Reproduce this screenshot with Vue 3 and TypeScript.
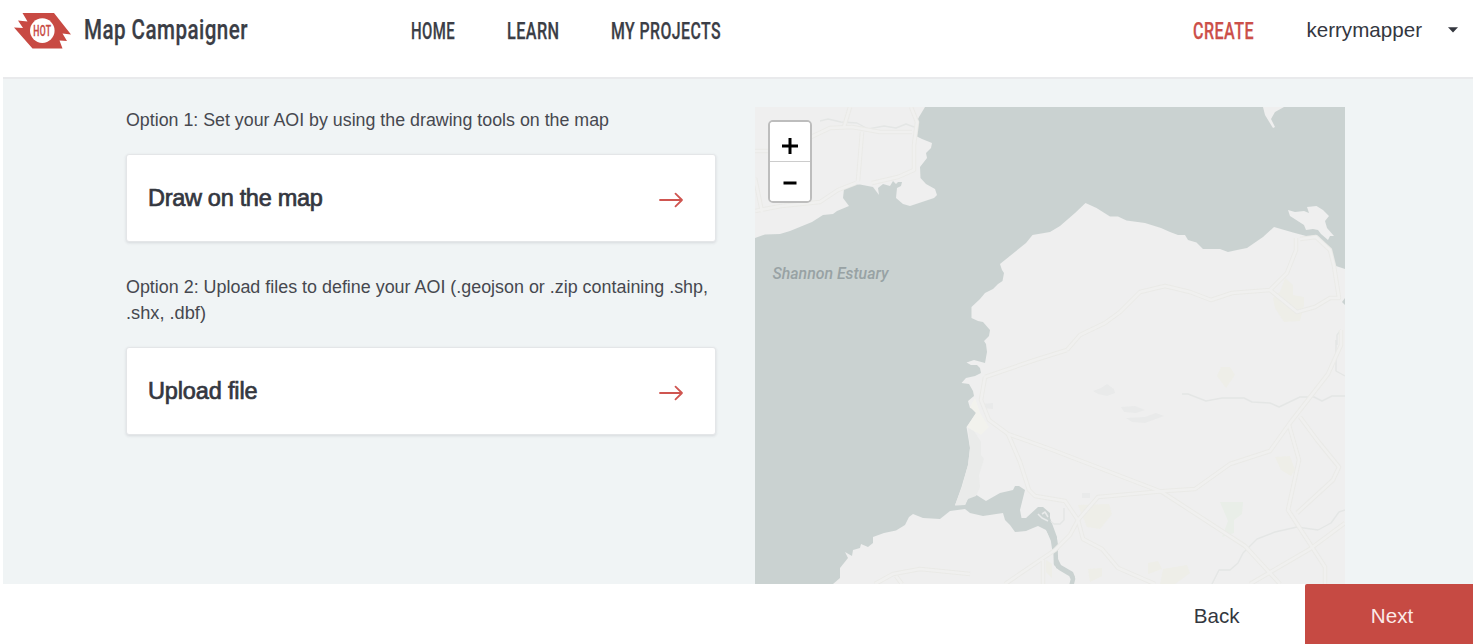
<script setup lang="ts">
interface Option {
  lines: { text: string; width: number }[]
  title: string
  cls: string
}

const navItems = [
  { label: 'HOME', width: 44 },
  { label: 'LEARN', width: 52.5 },
  { label: 'MY PROJECTS', width: 110 },
]

const options: Option[] = [
  {
    lines: [{ text: 'Option 1: Set your AOI by using the drawing tools on the map', width: 483 }],
    title: 'Draw on the map',
    cls: 'draw',
  },
  {
    lines: [
      { text: 'Option 2: Upload files to define your AOI (.geojson or .zip containing .shp,', width: 582 },
      { text: '.shx, .dbf)', width: 80 },
    ],
    title: 'Upload file',
    cls: 'upload',
  },
]

const land: string[] = [
  'M755 107H925L919 117L914 128L916 136L922 139L932 143L931 148L926 153L927 158L920 167L920.500 178L926 184L935 189L937 195L934 198L910 206L903 204L896 198L897 188L901 186L902 182L898 182L896 184L893 181L890 186L883 184L878 188L879 195L873 187L860 184.500L850 185L844 189L843 198L849 206L837 211L833 214L823 215L812 222L790 231L780 234L765 234.500L755 238Z',
  'M1050 232L1032.500 235L1026 243L1000 264L1002 270L1004 273L1002.500 281L998 284L993 289L985 293L980 299L971.500 307V318L978 321L983 322L990 330L989 336L984 341L986 344L987 352L985 363L974 360L966.500 362.500L971 365L977 365L980 368L981 373L975 376L966 378L961.500 383L969 384L973 391L974 396L968 401L970 408L975 409L976 413L966.500 427L970 448L968 465L961.500 487L955 505.500L965 505L968 498L976.500 495L986 501L1000 493L1013 490L1015 486L1019 486L1025 490L1020 510L1021.500 518L1026 518L1038 507L1043 507L1050 513V518L1057 537V557L1061 565L1073 572L1075 577L1073 584H1345V269L1333 265L1331 251L1323 245L1316 235L1308 236.500L1293 232.500L1274 227L1263 237L1247 248L1237 250L1228 252L1220 249H1203L1196.500 242.500L1188 240L1185 235L1178 235L1170 232L1161 228L1145 223L1126.500 220.500L1118 216.500H1110L1096.500 208L1085.500 203L1075 213L1060 226Z',
  'M1071 584L1071 575L1056 568L1055 548L1050 537L1046 530L1038 526L1033 528L1026 531L1015 532L1010 525L1005 520L1003 513L983 516L970 513L965 509L950 511L940 519L923 518L913 514L909 517L905 525L896 530.500L884 533L873 537L873 543L868 547L861 544L860 548L853 550L852 556L845 552L848 558L840 568L840 578L833 584Z',
  'M1263 107H1284L1275 112L1271 119L1275 127L1273 128L1265 115Z',
  'M1288 210L1295 212L1304 211L1309 213L1307 207L1316.500 206L1323 210L1329 216L1325 221L1327 228L1334 236L1330 236L1328 240L1321 234L1318 230L1313 229L1306 230L1304 225L1290 216Z',
]

const roads: string[] = [
  'M755 151H775L811 137L830 128L852 127L880 132L912 132',
  'M850 107L844 127M911 107L917 122L914 145V170L898 177L872 183M862 132L858 181',
  'M755 211L781 206L820 202L838 190L856 183M755 178L762 212',
  'M1067 350L1080 335L1105 323L1120 312L1140 292L1165 286L1190 292L1211 300L1232 293L1270 290L1287 273L1296 250V238',
  'M1270 290L1297 312L1315 307L1330 298L1339 298L1334 266L1330 250L1316 237L1300 239',
  'M985 377L1035 360L1067 350M985 377L981 400L989 420L1008 434L1050 449L1162 492L1245 546L1280 584',
  'M1008 434L1020 462L1029 490L1035 496L1065 501L1078 520L1083 539L1102 549L1118 568L1155 584',
  'M1078 520L1098 497L1165 491L1195 489L1230 464L1270 451L1290 423L1328 374L1341 345V330',
  'M1289 425L1299 460L1288 510L1325 567V584',
  'M1300 417L1317 440L1339 467L1333 480L1297 513',
  'M875 584L893 574L920 569L970 574M896 576L902 584M1005 584L1055 550L1070 535L1078 520M1043 560V584M1250 584L1310 549L1345 523',
]
const streams: string[] = [
  'M820 121L828 119L841 122L857 123L868 129L884 126L896 128L906 124L914 127',
  'M1182 394H1188L1206 401L1222 398L1244 398L1252 402L1270 403L1279 407L1300 397L1314 397L1322 401L1332 396H1345',
  'M1212 584L1219 570L1230 570L1238 563L1243 553L1257 539L1275 532L1297 527L1318 530L1331 523L1339 512L1345 510',
  'M1336 340V371L1345 376M1337 345V335L1341 330',
  'M1050 521L1054 524L1060 524L1064 520L1064 508',
]
const towns: string[] = [
  'M1285 278L1293 285V295L1304 297V305L1300 321L1284 322L1275 308L1273 298L1280 292Z',
  'M1078 505L1109 504L1112 514L1100 529L1087 527Z',
  'M1221 367H1230L1235 375L1226 388L1217 376Z',
  'M1275 457L1290 456L1295 470L1291 476L1281 470Z',
  'M1163 569L1187 565L1190 573L1175 584H1160ZM1148 563L1158 561L1162 569L1148 574ZM1088 569L1102 568V576L1090 582ZM1046 560L1052 564V578L1046 572Z',
]
</script>

<template>
  <div class="page">
    <header class="header">
      <div class="brand">
        <svg class="logo" width="58" height="36" viewBox="0 0 58 36">
          <path fill="#c84a43" d="M8.500 0H40L57 21.500L48.500 20.500L53 28L45.500 27.500L48.500 35.500H18.500L0 14.500L9 15L4 7.500L13.500 8.500Z" />
          <circle cx="28.300" cy="17.600" r="12.300" fill="#fff" />
          <text x="19.300" y="22.600" textLength="18" lengthAdjust="spacingAndGlyphs" class="hot">HOT</text>
        </svg>
        <svg class="cond name" width="165" height="36">
          <text x="0" y="26" textLength="164" lengthAdjust="spacingAndGlyphs">Map Campaigner</text>
        </svg>
      </div>
      <nav class="nav">
        <a v-for="n in navItems" :key="n.label">
          <svg class="cond" :width="n.width" height="30">
            <text x="0" y="24" :textLength="n.width" lengthAdjust="spacingAndGlyphs">{{ n.label }}</text>
          </svg>
        </a>
      </nav>
      <div class="account">
        <svg class="cond create" width="61" height="30">
          <text x="0" y="24" textLength="61" lengthAdjust="spacingAndGlyphs">CREATE</text>
        </svg>
        <span class="user">kerrymapper</span>
        <svg class="caret" width="10" height="6" viewBox="0 0 10 6"><path d="M0 .3H10L5 5.500Z" fill="#34373f" /></svg>
      </div>
    </header>

    <main class="main">
      <section class="options">
        <div v-for="o in options" :key="o.title" class="option">
          <svg class="desc" width="590" :height="o.lines.length * 26">
            <text v-for="(l, i) in o.lines" :key="i" x="0" :y="19 + i * 26" :textLength="l.width" lengthAdjust="spacingAndGlyphs">{{ l.text }}</text>
          </svg>
          <button class="card" type="button">
            <span class="title" :class="o.cls">{{ o.title }}</span>
            <svg width="24" height="16" viewBox="0 0 24 16" fill="none" stroke="#cf5550" stroke-width="1.800" stroke-linecap="round" stroke-linejoin="round">
              <path d="M1 8H23M16.500 1.700L23 8L16.500 14.300" />
            </svg>
          </button>
        </div>
      </section>

      <section class="map">
        <svg class="tiles" width="590" height="477" viewBox="755 107 590 477">
          <rect x="755" y="107" width="590" height="477" fill="#cad2d1" />
          <path v-for="d in land" :key="d" :d="d" fill="#efefef" />
          <path d="M968 428L974 431L981 442V455L984 459L979 475L980 487L976 496L968 499L965 505H955L962 487L968 465L970 448Z" fill="#eaebea" />
          <path d="M1093 391L1101 388L1107 384L1114 389L1115 393L1107 396L1098 394ZM1121 407L1135 406L1145 410L1136 413L1124 412ZM1126 418L1145 417L1156 413L1164 416L1145 423L1132 422ZM981 404L993 403V409L982 408ZM1082 493H1090V498H1082Z" fill="#e9eaea" />
          <path d="M1220 502H1243L1242 514L1234 520V533L1222 537L1228 521Z" fill="#e9eee8" />
          <path v-for="d in towns" :key="d" :d="d" fill="#eeeee8" />
          <path d="M975 398L980 413L989 427L981 435L967 427L976 413L970 407Z" fill="#f2f2ed" />
          <g fill="none" stroke-linejoin="round">
            <path v-for="d in streams" :key="d" :d="d" stroke="#e4e6e5" stroke-width="1.400" />
            <path d="M1046 517L1049 528L1054 540L1055.500 550" stroke="#cad2d1" stroke-width="6.500" />
            <path d="M1055.500 548L1056 564L1060 568L1071 574.500L1073 579L1071.500 585" stroke="#cad2d1" stroke-width="4.500" />
            <path v-for="d in roads" :key="d" :d="d" stroke="#eaeae7" stroke-width="4.500" />
            <path v-for="d in roads" :key="'i' + d" :d="d" stroke="#f0f0ef" stroke-width="2.600" />
            <path d="M1038 514L1042 518L1048 521M1042 514L1045 512L1048 517" stroke="#e8eaea" stroke-width="1.600" />
          </g>
          <path d="M1342 302L1345 298V305Z" fill="#cad2d1" />
          <text x="772.500" y="279" textLength="116" lengthAdjust="spacingAndGlyphs" class="place">Shannon Estuary</text>
        </svg>
        <div class="zoom">
          <button type="button" aria-label="Zoom in"><svg width="18" height="18"><path d="M9 1V17M1 9H17" stroke="#000" stroke-width="3" /></svg></button>
          <button type="button" aria-label="Zoom out"><svg width="18" height="18"><path d="M2.500 9H15.500" stroke="#000" stroke-width="3.200" /></svg></button>
        </div>
      </section>
    </main>

    <footer class="footer">
      <button class="back" type="button">Back</button>
      <button class="next" type="button">Next</button>
    </footer>
  </div>
</template>

<style>
body {
  background: #fff;
  overflow: hidden;
}
</style>

<style scoped>
.page {
  width: 1470px;
  height: 644px;
  margin-left: 3px;
  display: flex;
  flex-direction: column;
  font-family: "Liberation Sans", Arial, sans-serif;
  color: #34373f;
}
svg {
  display: block;
  overflow: visible;
  flex: none;
}
button {
  font: inherit;
  color: inherit;
  border: 0;
  padding: 0;
}
.header {
  box-sizing: border-box;
  height: 79px;
  border-bottom: 2px solid #e9eaec;
  display: flex;
  align-items: flex-start;
  flex: none;
}
.brand {
  display: flex;
  width: 407.500px;
  padding: 12.500px 0 0 10.500px;
  box-sizing: border-box;
}
.name {
  margin-left: 12px;
}
.hot {
  font: 500 14px Roboto, sans-serif;
  letter-spacing: 0.5px;
  fill: #c84a43;
  stroke: #c84a43;
  stroke-width: 0.3px;
}
.cond {
  font: 500 23px Roboto, sans-serif;
  letter-spacing: 0.6px;
  fill: #3b3e46;
  stroke: #3b3e46;
  stroke-width: 0.25px;
}
.cond.name {
  font-size: 27px;
}
.cond.create {
  fill: #cc4f49;
  stroke: #cc4f49;
}
.nav {
  display: flex;
  gap: 52px;
  padding-top: 15px;
}
.account {
  display: flex;
  align-items: center;
  margin-left: auto;
  padding: 15px 15.500px 0 0;
}
.user {
  font-size: 20.600px;
  line-height: 30px;
  margin: 0 25.500px 0 52px;
}
.main {
  height: 505px;
  flex: none;
  box-sizing: border-box;
  background: #f0f4f5;
  padding: 28px 128px 0 123px;
  display: flex;
  justify-content: space-between;
}
.options {
  width: 590px;
  display: flex;
  flex-direction: column;
  gap: 32px;
}
.option {
  display: flex;
  flex-direction: column;
  gap: 21px;
}
.desc {
  font-size: 17.500px;
  fill: #46484f;
}
.card {
  box-sizing: border-box;
  width: 590px;
  height: 88px;
  background: #fff;
  border: 1px solid #e4e6e8;
  border-radius: 3px;
  box-shadow: 0 1px 3px rgba(60, 60, 80, 0.14);
  display: flex;
  align-items: center;
  justify-content: space-between;
  padding: 4px 32px 0 21px;
}
.title {
  font-size: 23.500px;
  -webkit-text-stroke: 0.7px #34373f;
  margin-top: -3px;
}
.draw {
  letter-spacing: -0.3px;
}
.upload {
  letter-spacing: -0.15px;
}
.map {
  position: relative;
  width: 590px;
  height: 477px;
}
.tiles {
  overflow: hidden;
}
.place {
  font: italic 500 17px Roboto, sans-serif;
  fill: #98a2a4;
}
.zoom {
  position: absolute;
  left: 13px;
  top: 13px;
  box-sizing: border-box;
  width: 44px;
  height: 83px;
  border: 2px solid #bdbdbd;
  border-radius: 5px;
  background: #fff;
  overflow: hidden;
}
.zoom button {
  box-sizing: border-box;
  display: flex;
  align-items: center;
  justify-content: center;
  width: 100%;
  height: 39px;
  padding-top: 2px;
  background: #fff;
}
.zoom button:first-child {
  height: 40px;
  padding-top: 8px;
  border-bottom: 1.500px solid #ccc;
}
.footer {
  display: flex;
  justify-content: flex-end;
  height: 60px;
  font-size: 20.600px;
}
.back {
  background: #fff;
  padding: 3px 65.500px 0;
}
.next {
  width: 168px;
  padding: 3px 0 0 6px;
  background: #c64a43;
  color: #fbe9e8;
  border-radius: 2px 0 0 0;
}
</style>
